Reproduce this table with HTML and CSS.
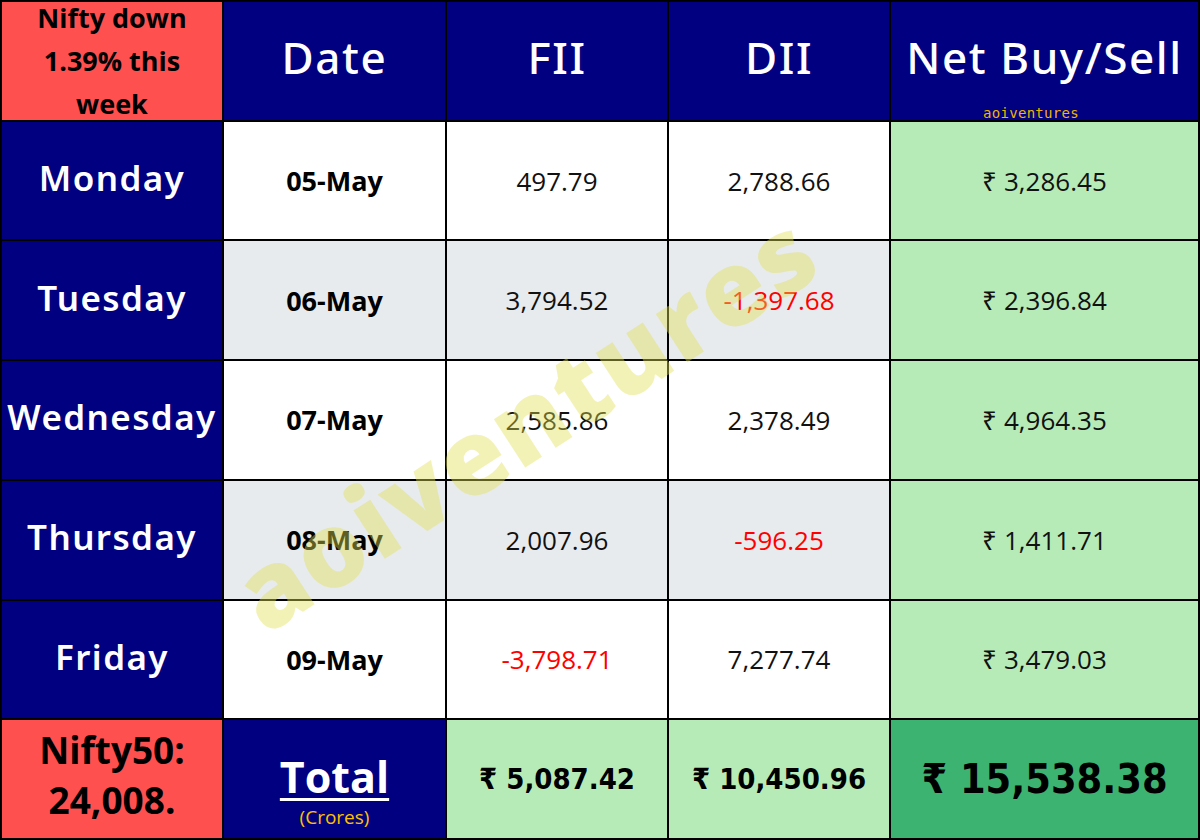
FILE: index.html
```html
<!DOCTYPE html>
<html>
<head>
<meta charset="utf-8">
<link rel="stylesheet" href="styles.css">
</head>
<body>
<div class="sheet">
  <div class="cell red note">Nifty down<br>1.39% this<br>week</div>
  <div class="cell navy head">Date</div>
  <div class="cell navy head">FII</div>
  <div class="cell navy head">DII</div>
  <div class="cell navy head net">Net Buy/Sell<span class="tag">aoiventures</span></div>

  <div class="cell navy day">Monday</div>
  <div class="cell white date">05-May</div>
  <div class="cell white val">497.79</div>
  <div class="cell white val">2,788.66</div>
  <div class="cell green val">₹ 3,286.45</div>

  <div class="cell navy day">Tuesday</div>
  <div class="cell gray date">06-May</div>
  <div class="cell gray val">3,794.52</div>
  <div class="cell gray val neg">-1,397.68</div>
  <div class="cell green val">₹ 2,396.84</div>

  <div class="cell navy day">Wednesday</div>
  <div class="cell white date">07-May</div>
  <div class="cell white val">2,585.86</div>
  <div class="cell white val">2,378.49</div>
  <div class="cell green val">₹ 4,964.35</div>

  <div class="cell navy day">Thursday</div>
  <div class="cell gray date">08-May</div>
  <div class="cell gray val">2,007.96</div>
  <div class="cell gray val neg">-596.25</div>
  <div class="cell green val">₹ 1,411.71</div>

  <div class="cell navy day">Friday</div>
  <div class="cell white date">09-May</div>
  <div class="cell white val neg">-3,798.71</div>
  <div class="cell white val">7,277.74</div>
  <div class="cell green val">₹ 3,479.03</div>

  <div class="cell red nifty">Nifty50:<br>24,008.</div>
  <div class="cell navy total"><span class="total-word">Total</span><span class="crores">(Crores)</span></div>
  <div class="cell green sum">₹ 5,087.42</div>
  <div class="cell green sum">₹ 10,450.96</div>
  <div class="cell dark grand">₹ 15,538.38</div>

  <div class="watermark">aoiventures</div>
</div>
</body>
</html>
```
FILE: styles.css
```css
html, body {
  margin: 0;
  padding: 0;
  background: #ffffff;
}

.sheet {
  position: relative;
  width: 1200px;
  height: 840px;
  box-sizing: border-box;
  padding: 2px;
  background: #000000;
  display: grid;
  grid-template-columns: 220px 221px 220px 220px 1fr;
  grid-template-rows: repeat(7, minmax(0, 1fr));
  gap: 2px;
  overflow: hidden;
}

.cell {
  display: flex;
  align-items: center;
  justify-content: center;
  text-align: center;
  min-height: 0;
  box-sizing: border-box;
  font-family: "Noto Sans", "DejaVu Sans", sans-serif;
}

.red { background: #ff5050; }
.navy { background: #000080; color: #ffffff; }
.white { background: #ffffff; }
.gray { background: #e8ebee; }
.green { background: #b6ebb8; }
.dark { background: #3cb371; }

.note {
  font-family: "Open Sans", sans-serif;
  font-weight: 700;
  font-size: 27px;
  line-height: 43px;
  color: #000;
}

.head {
  font-family: "Noto Sans", sans-serif;
  font-size: 44px;
  font-weight: 500;
  letter-spacing: 1.6px;
  padding-bottom: 8px;
}

.net {
  position: relative;
}

.tag {
  position: absolute;
  left: 92px;
  bottom: -1px;
  font-family: "DejaVu Sans Mono", monospace;
  font-size: 14px;
  letter-spacing: 0.3px;
  color: #f0b400;
}

.day {
  font-family: "Noto Sans", sans-serif;
  font-size: 35px;
  font-weight: 600;
  letter-spacing: 1.4px;
  padding-bottom: 6px;
}

.date {
  font-family: "Open Sans", sans-serif;
  font-size: 27px;
  font-weight: 700;
  color: #000;
}

.val {
  font-family: "Open Sans", sans-serif;
  font-size: 26px;
  color: #111;
}

.neg { color: #ff0000; }

.nifty {
  font-family: "Open Sans", sans-serif;
  font-weight: 700;
  font-size: 37px;
  line-height: 50px;
  color: #000;
  padding-bottom: 8px;
}

.total {
  flex-direction: column;
  padding-top: 26px;
}

.total-word {
  font-family: "Open Sans", sans-serif;
  font-weight: 700;
  font-size: 43px;
  line-height: 46px;
  text-decoration: underline;
  text-decoration-thickness: 3px;
  text-underline-offset: 5px;
}

.crores {
  font-family: "Open Sans", sans-serif;
  font-size: 19px;
  color: #ffc000;
  margin-top: 4px;
}

.sum {
  font-family: "DejaVu Sans Condensed", "DejaVu Sans", sans-serif;
  font-stretch: condensed;
  font-weight: 700;
  font-size: 29px;
  color: #000;
}

.grand {
  font-family: "DejaVu Sans Condensed", "DejaVu Sans", sans-serif;
  font-stretch: condensed;
  font-weight: 700;
  font-size: 41px;
  color: #000;
}

.watermark {
  position: absolute;
  left: 524px;
  top: 420px;
  transform: translate(-50%, -50%) rotate(-33deg);
  font-family: "Open Sans", sans-serif;
  font-weight: 800;
  font-size: 104px;
  letter-spacing: 2px;
  color: rgba(225, 225, 80, 0.42);
  white-space: nowrap;
  pointer-events: none;
}
```
